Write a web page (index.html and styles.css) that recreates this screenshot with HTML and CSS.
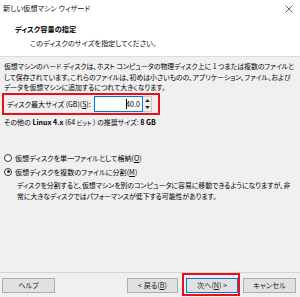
FILE: index.html
```html
<!DOCTYPE html>
<html lang="ja">
<head>
<meta charset="utf-8">
<link rel="stylesheet" href="styles.css">
</head>
<body>
<div class="window">
  <div class="header">
    <div class="titlebar">
      <span class="title">新しい仮想マシン ウィザード</span>
      <svg class="close" width="8" height="8" viewBox="0 0 8 8"><path d="M0.5 0.5L7.5 7.5M7.5 0.5L0.5 7.5" stroke="#666" stroke-width="1" fill="none"/></svg>
    </div>
    <div class="heading">ディスク容量の指定</div>
    <div class="subheading">このディスクのサイズを指定してください。</div>
  </div>
  <div class="content">
    <p class="intro">仮想マシンのハード ディスクは、ホスト コンピュータの物理ディスク上に 1 つまたは複数のファイルと<br>して保存されています。これらのファイルは、初めは小さいものの、アプリケーション、ファイル、および<br>データを仮想マシンに追加するにつれて大きくなります。</p>
    <div class="size-row">
      <span class="size-label">ディスク最大サイズ (GB)(<u>S</u>):</span>
      <div class="spin">
        <div class="spin-input"><span class="caret"></span>40.0</div>
        <div class="spin-btns">
          <div class="spin-btn"><svg width="5" height="3" viewBox="0 0 5 3"><path d="M0 3L2.5 0L5 3Z" fill="#333"/></svg></div>
          <div class="spin-btn"><svg width="5" height="3" viewBox="0 0 5 3"><path d="M0 0L2.5 3L5 0Z" fill="#333"/></svg></div>
        </div>
      </div>
    </div>
    <div class="recommend">その他の <b>Linux 4.x</b> (64 <span class="small">ビット</span> ) の推奨サイズ: <b>8 GB</b></div>
    <div class="options">
      <label class="radio"><span class="dot"></span>仮想ディスクを単一ファイルとして格納(<u>O</u>)</label>
      <label class="radio"><span class="dot on"></span>仮想ディスクを複数のファイルに分割(<u>M</u>)</label>
      <p class="desc">ディスクを分割すると、仮想マシンを別のコンピュータに容易に移動できるようになりますが、非<br>常に大きなディスクではパフォーマンスが低下する可能性があります。</p>
    </div>
  </div>
  <div class="footer">
    <button class="btn help">ヘルプ</button>
    <div class="nav">
      <button class="btn back">&lt; 戻る(<u>B</u>)</button>
      <button class="btn next">次へ(<u>N</u>) &gt;</button>
      <button class="btn cancel">キャンセル</button>
    </div>
  </div>
</div>
</body>
</html>
```

FILE: styles.css
```css
html, body {
  margin: 0;
  padding: 0;
}
body {
  font-family: "Noto Sans CJK JP", "Noto Sans", sans-serif;
  font-feature-settings: "palt";
  font-size: 7.2px;
  color: #000;
  background: #f0f0f0;
}
.window {
  width: 300px;
  height: 297px;
  display: flex;
  flex-direction: column;
  background: #f0f0f0;
  overflow: hidden;
}
.header {
  background: #ffffff;
  border-bottom: 1px solid #dcdcdc;
  box-sizing: border-box;
  height: 57px;
}
.titlebar {
  display: flex;
  justify-content: space-between;
  align-items: center;
  padding: 2px 7px 0 3px;
  height: 12px;
  line-height: 12px;
}
.title {
  color: #111;
}
.close {
  display: block;
  margin-top: 2px;
}
.heading {
  margin: 9px 0 0 15px;
  line-height: 12px;
  font-weight: bold;
  color: #000;
}
.subheading {
  margin: 2px 0 0 30px;
  line-height: 12px;
  color: #111;
}
.content {
  padding: 0 4px;
  flex: 1;
  font-size: 6.85px;
}
.intro {
  margin: 4px 0 0 0;
  line-height: 10.5px;
  white-space: nowrap;
}
.size-row {
  margin: 0 0 0 -2px;
  width: 158px;
  height: 22px;
  box-sizing: border-box;
  border: 2px solid #e8101e;
  display: flex;
  align-items: center;
  padding-left: 3px;
}
.size-label {
  width: 87px;
  white-space: nowrap;
  font-size: 7px;
}
.spin {
  display: flex;
  height: 16px;
}
.spin-input {
  width: 49px;
  box-sizing: border-box;
  background: #fff;
  border: 1px solid #0078d7;
  text-align: right;
  padding-right: 2px;
  line-height: 14px;
  font-size: 7.2px;
}
.caret {
  display: inline-block;
  width: 1px;
  height: 10px;
  background: #000;
  vertical-align: -2px;
  margin-right: -1px;
}
.spin-btns {
  width: 9px;
  display: flex;
  flex-direction: column;
  border: 1px solid #c8c8c8;
  border-left: none;
  box-sizing: border-box;
  background: #f2f2f2;
}
.spin-btn {
  flex: 1;
  display: flex;
  align-items: center;
  justify-content: center;
}
.recommend {
  margin-top: 2px;
  line-height: 11px;
  font-size: 7px;
}
.recommend b {
  font-weight: 600;
}
.small {
  font-size: 6px;
}
.options {
  margin-top: 24px;
}
.radio {
  display: flex;
  align-items: center;
  line-height: 12px;
  height: 12px;
  margin-bottom: 2px;
  font-size: 7.1px;
}
.dot {
  width: 8px;
  height: 8px;
  box-sizing: border-box;
  border: 1px solid #333;
  border-radius: 50%;
  background: #fff;
  margin: 0 3px 0 0;
  position: relative;
}
.dot.on::after {
  content: "";
  position: absolute;
  left: 1.5px;
  top: 1.5px;
  width: 3px;
  height: 3px;
  border-radius: 50%;
  background: #222;
}
.desc {
  margin: 0 0 0 13px;
  line-height: 11.5px;
  white-space: nowrap;
}
.footer {
  border-top: 1px solid #d5d5d5;
  height: 25px;
  box-sizing: border-box;
  padding: 5px 4px 0 2px;
  display: flex;
  justify-content: space-between;
  align-items: flex-start;
}
.nav {
  display: flex;
  gap: 5px;
}
.btn {
  font-family: inherit;
  font-size: 7.2px;
  font-feature-settings: "palt";
  height: 15px;
  width: 53px;
  padding: 0;
  margin: 0;
  box-sizing: border-box;
  background: #e1e1e1;
  border: 1px solid #adadad;
  color: #222;
  line-height: 13px;
}
.back {
  width: 51px;
  margin-right: 3px;
}
.next {
  width: 52px;
  border-color: #0078d7;
  position: relative;
}
.next::after {
  content: "";
  position: absolute;
  left: -5px;
  right: -3px;
  top: -6px;
  bottom: -4px;
  border: 2px solid #e8101e;
}
.cancel {
  width: 53px;
}
```
